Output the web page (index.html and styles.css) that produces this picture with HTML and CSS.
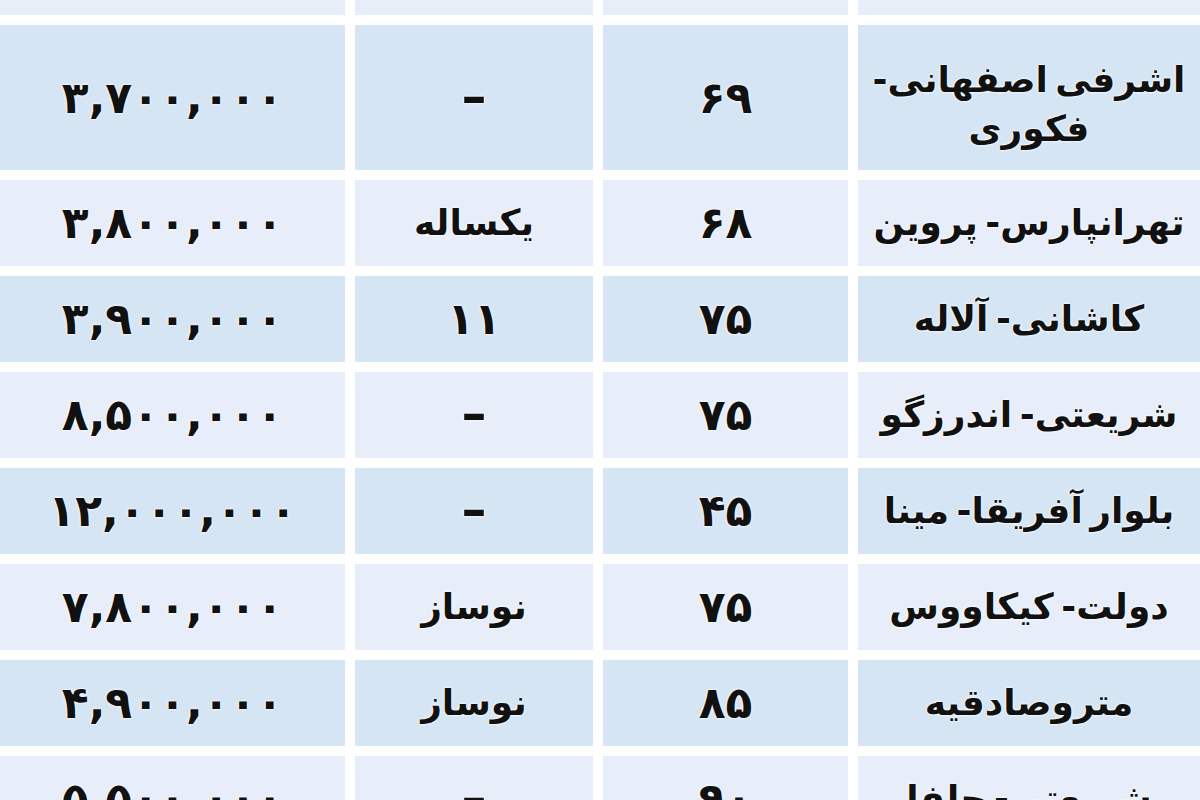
FILE: index.html
```html
<!DOCTYPE html>
<html lang="fa" dir="rtl">
<head>
<meta charset="utf-8">
<title>جدول قیمت</title>
<link rel="stylesheet" href="styles.css">
</head>
<body>
<div class="table">
  <div class="row light">
    <div class="cell loc"></div><div class="cell"></div><div class="cell"></div><div class="cell"></div>
  </div>
  <div class="row blue tall">
    <div class="cell loc two-line">اشرفی اصفهانی-<br>فکوری</div>
    <div class="cell num">۶۹</div>
    <div class="cell dash">–</div>
    <div class="cell price">۳,۷۰۰,۰۰۰</div>
  </div>
  <div class="row light">
    <div class="cell loc">تهرانپارس- پروین</div>
    <div class="cell num">۶۸</div>
    <div class="cell">یکساله</div>
    <div class="cell price">۳,۸۰۰,۰۰۰</div>
  </div>
  <div class="row blue">
    <div class="cell loc">کاشانی- آلاله</div>
    <div class="cell num">۷۵</div>
    <div class="cell num">۱۱</div>
    <div class="cell price">۳,۹۰۰,۰۰۰</div>
  </div>
  <div class="row light">
    <div class="cell loc">شریعتی- اندرزگو</div>
    <div class="cell num">۷۵</div>
    <div class="cell dash">–</div>
    <div class="cell price">۸,۵۰۰,۰۰۰</div>
  </div>
  <div class="row blue">
    <div class="cell loc">بلوار آفریقا- مینا</div>
    <div class="cell num">۴۵</div>
    <div class="cell dash">–</div>
    <div class="cell price">۱۲,۰۰۰,۰۰۰</div>
  </div>
  <div class="row light">
    <div class="cell loc">دولت- کیکاووس</div>
    <div class="cell num">۷۵</div>
    <div class="cell">نوساز</div>
    <div class="cell price">۷,۸۰۰,۰۰۰</div>
  </div>
  <div class="row blue">
    <div class="cell loc">متروصادقیه</div>
    <div class="cell num">۸۵</div>
    <div class="cell">نوساز</div>
    <div class="cell price">۴,۹۰۰,۰۰۰</div>
  </div>
  <div class="row light">
    <div class="cell loc">شریعتی- جلفا</div>
    <div class="cell num">۹۰</div>
    <div class="cell dash">–</div>
    <div class="cell price">۵,۵۰۰,۰۰۰</div>
  </div>
</div>
</body>
</html>
```

FILE: styles.css
```css
html, body {
  margin: 0;
  padding: 0;
  background: #ffffff;
  overflow: hidden;
  width: 1200px;
  height: 800px;
}

.table {
  display: flex;
  flex-direction: column;
  gap: 10px;
  margin-top: -71px;
  font-family: "DejaVu Sans", "Noto Sans", sans-serif;
  font-weight: bold;
  font-size: 36px;
  color: #111111;
}

.row {
  display: grid;
  grid-template-columns: 342px 245px 238px 345px;
  column-gap: 10px;
  height: 86px;
}

.row.tall {
  height: 145px;
}

.cell {
  display: flex;
  align-items: center;
  justify-content: center;
  text-align: center;
  line-height: 1.35;
  text-shadow: 0 0 3px #ffffff, 0 0 2px #ffffff;
}

.loc {
  word-spacing: -5px;
}

.two-line {
  padding-top: 14px;
  box-sizing: border-box;
}

.row.blue .cell {
  background: #d5e5f4;
}

.row.light .cell {
  background: #e7eef9;
}

.num {
  font-size: 44px;
}

.price {
  font-size: 44px;
}

.dash {
  font-size: 50px;
}
```
